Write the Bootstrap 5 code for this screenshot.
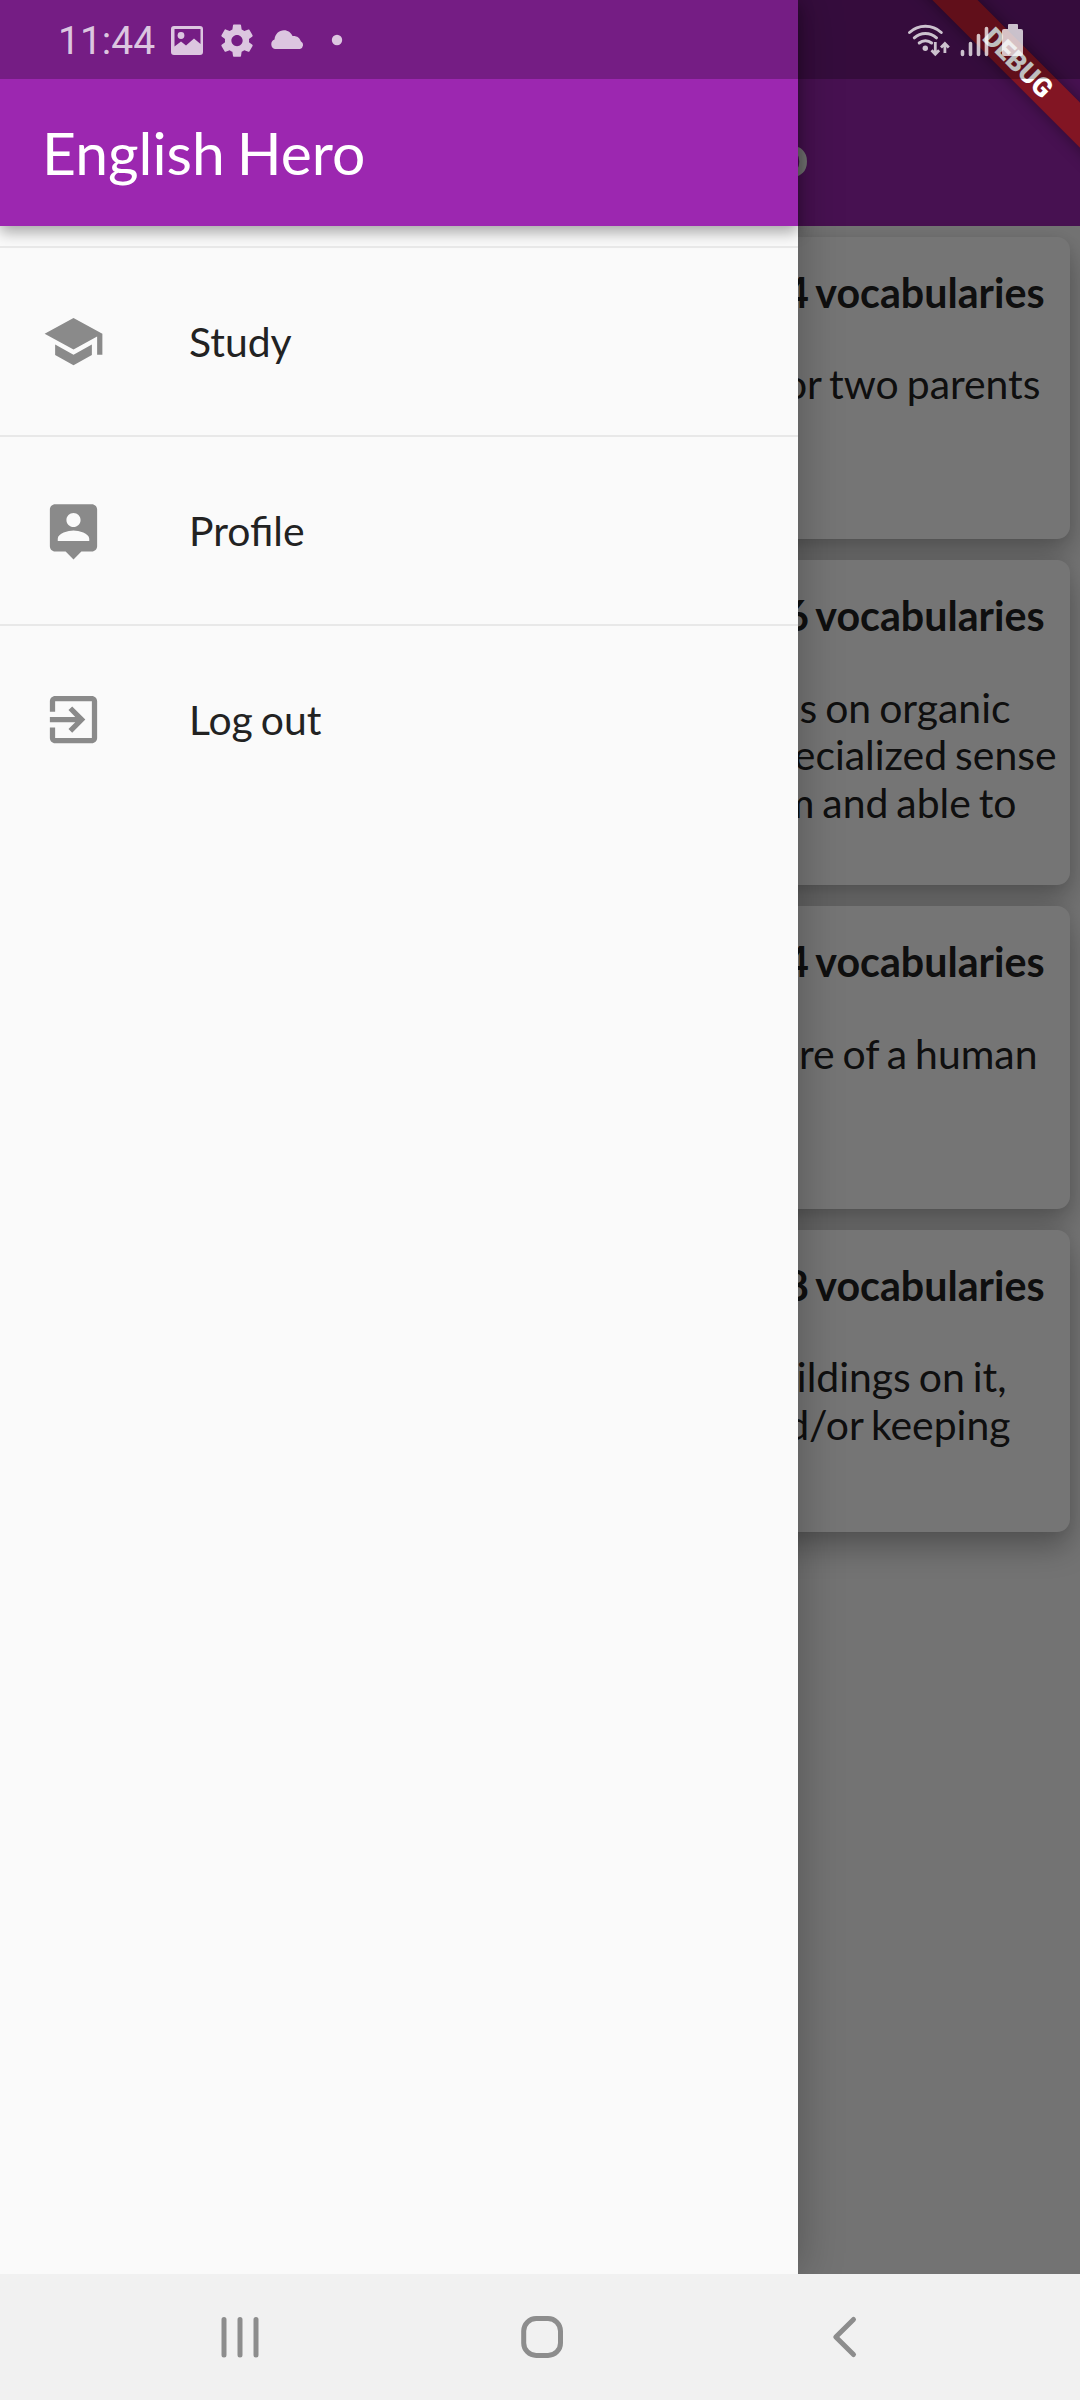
<!DOCTYPE html>
<html lang="en">
<head>
<meta charset="utf-8">
<meta name="viewport" content="width=device-width, initial-scale=1">
<title>English Hero</title>
<link href="https://cdn.jsdelivr.net/npm/bootstrap@5.3.0/dist/css/bootstrap.min.css" rel="stylesheet">
<style>
  body { font-family: Lato, "Liberation Sans", sans-serif; font-size: 40.900px; line-height: 47.5px; word-spacing: -2.5px; color: #222; }
  .screen { width: 1080px; height: 2400px; background: #fafafa; }
  .stage { height: 2274px; }
  .topbar { height: 226px; padding-top: 80px; background: #9c27b0; color: #fff; font-size: 58.8px; line-height: 146px; word-spacing: -3px; }
  .page-title { padding: 1px 271px 0 0; font-size: 60px; font-weight: 700; }
  .topic-list { padding: 10.5px; gap: 21px; }
  .topic { min-height: 302.5px; border: 0; border-radius: 13px; background: #fff; padding: 31px 0 0;
    box-shadow: 0 16px 30px rgba(0,0,0,.27), 0 2px 14px rgba(0,0,0,.07); }
  .topic.tall { min-height: 325.3px; }
  .topic h2 { font-size: 41.200px; line-height: 48px; font-weight: 700; margin: 0 25px 44.5px 0; }
  .topic p { margin: 0; white-space: nowrap; }
  .scrim { background: rgba(0,0,0,.54); }
  .drawer { width: 798px; background: #fafafa; box-shadow: 0 0 42px rgba(0,0,0,.28); }
  .drawer .topbar { padding-left: 42px; box-shadow: 0 6px 14px rgba(0,0,0,.34); }
  .drawer-menu { padding-top: 20px; }
  .drawer-menu .list-group-item { height: 189px; border: 0; border-top: 2px solid #e8e8e8; border-radius: 0; padding: 0 42px; gap: 84px; background: transparent; color: #222; }
  .drawer-menu svg { width: 63px; height: 63px; fill: #8a8a8a; }
  .banner-clip { width: 200px; height: 226px; }
  .debug-banner { width: 340px; height: 31.8px; left: -32.5px; top: 46.6px; transform: rotate(45deg); background: #821523;
    box-shadow: 0 0 16px rgba(0,0,0,.4); color: #fff; font: 900 26.8px/32px Roboto, sans-serif; }
  .statusbar { height: 79px; background: rgba(0,0,0,.25); color: rgba(255,255,255,.75); font: 400 39px/83px Roboto, sans-serif; }
  .statusbar svg { display: block; }
  .clock { width: 160px; padding-left: 58px; }
  .navbar-system { height: 126px; background: #f1f1f1; }
</style>
</head>
<body>
<div class="screen position-relative overflow-hidden">
  <main class="stage position-relative overflow-hidden">
    <header class="topbar text-end"><div class="page-title">o</div></header>
    <section class="topic-list d-flex flex-column">
      <article class="card topic text-end">
        <h2>4 vocabularies</h2>
        <p style="padding-right:29px">or two parents</p>
      </article>
      <article class="card topic tall text-end">
        <h2>6 vocabularies</h2>
        <p style="padding-right:59px">s on organic</p>
        <p style="padding-right:13px">ecialized sense</p>
        <p style="padding-right:53px">m and able to</p>
      </article>
      <article class="card topic text-end">
        <h2>4 vocabularies</h2>
        <p style="padding-right:32px">re of a human</p>
      </article>
      <article class="card topic text-end">
        <h2>8 vocabularies</h2>
        <p style="padding-right:63px">ildings on it,</p>
        <p style="padding-right:59px">d/or keeping</p>
      </article>
    </section>
    <div class="scrim position-absolute top-0 start-0 w-100 h-100"></div>
    <aside class="drawer position-absolute top-0 start-0 h-100">
      <header class="topbar">English Hero</header>
      <nav class="drawer-menu list-group">
        <a class="list-group-item d-flex align-items-center" href="#">
          <svg viewBox="0 0 24 24"><path d="M5 13.18v4L12 21l7-3.820v-4L12 17l-7-3.820zM12 3L1 9l11 6 9-4.910V17h2V9L12 3z"/></svg><span>Study</span></a>
        <a class="list-group-item d-flex align-items-center" href="#">
          <svg viewBox="0 0 24 24"><path d="M19 2H5c-1.110 0-2 .9-2 2v14c0 1.100.890 2 2 2h4l3 3 3-3h4c1.100 0 2-.9 2-2V4c0-1.100-.9-2-2-2zm-7 3.300c1.490 0 2.700 1.210 2.700 2.700s-1.210 2.700-2.700 2.700S9.300 9.490 9.300 8s1.210-2.700 2.700-2.700zM18 16H6v-.9c0-2 4-3.100 6-3.100s6 1.100 6 3.100v.9z"/></svg><span>Profile</span></a>
        <a class="list-group-item d-flex align-items-center" href="#">
          <svg viewBox="0 0 24 24"><path d="M10.090 15.590L11.500 17l5-5-5-5-1.410 1.410L12.670 11H3v2h9.670l-2.580 2.590zM19 3H5c-1.110 0-2 .9-2 2v4h2V5h14v14H5v-4H3v4c0 1.100.890 2 2 2h14c1.100 0 2-.9 2-2V5c0-1.100-.9-2-2-2z"/></svg><span>Log out</span></a>
      </nav>
    </aside>
    <div class="banner-clip position-absolute top-0 end-0 overflow-hidden">
      <div class="debug-banner position-absolute text-center">DEBUG</div>
    </div>
    <div class="statusbar position-absolute top-0 start-0 w-100 d-flex justify-content-between">
      <div class="d-flex">
        <span class="clock">11:44</span>
        <svg width="190" height="79" viewBox="160 0 190 79" fill="currentColor">
          <path fill-rule="evenodd" d="M174 26h26a3 3 0 0 1 3 3v23a3 3 0 0 1-3 3h-26a3 3 0 0 1-3-3V29a3 3 0 0 1 3-3zM174.500 29v17.500L181 41.500l5 4 8-7 6.500 5.500V29z"/>
          <circle cx="181" cy="35.500" r="3.400"/>
          <path transform="translate(217.700 21.300) scale(1.610)" d="M19.430 12.980c.04-.320.070-.640.070-.980s-.03-.660-.070-.980l2.110-1.650c.190-.150.240-.420.120-.640l-2-3.460c-.120-.220-.390-.3-.610-.220l-2.490 1c-.520-.4-1.080-.730-1.690-.980l-.380-2.650C14.460 2.180 14.250 2 14 2h-4c-.250 0-.460.180-.490.420l-.380 2.650c-.610.250-1.170.590-1.690.980l-2.490-1c-.230-.090-.490 0-.610.220l-2 3.460c-.130.220-.070.490.120.640l2.110 1.650c-.04.320-.070.650-.070.980s.03.660.070.980l-2.110 1.650c-.190.150-.240.420-.120.640l2 3.460c.120.220.390.3.610.220l2.490-1c.520.4 1.080.730 1.690.980l.380 2.650c.03.240.240.420.490.420h4c.250 0 .460-.180.490-.420l.380-2.650c.610-.250 1.170-.590 1.690-.980l2.490 1c.230.090.490 0 .610-.220l2-3.460c.120-.220.070-.490-.120-.640l-2.110-1.650zM12 15.500c-1.930 0-3.500-1.570-3.500-3.500s1.570-3.500 3.500-3.500 3.500 1.570 3.500 3.500-1.570 3.500-3.500 3.500z"/>
          <path d="M275 49a5 5 0 0 1-.500-9.500C275 34 279 30.200 284 30.200c4 0 7 2.300 8.500 5.800 4.500-.300 7.500 2 8.300 5.200A4.200 4.200 0 0 1 300 49z"/>
          <circle cx="337" cy="40" r="5.200"/>
        </svg>
      </div>
      <svg width="180" height="79" viewBox="900 0 180 79" fill="none" stroke="currentColor" stroke-width="3" stroke-linecap="round">
        <path d="M909.500 32.500a23.500 23.500 0 0 1 31.800 0M914.300 37.800a16.500 16.500 0 0 1 22.200 0M919.200 43a9.500 9.500 0 0 1 12.400 0"/>
        <circle cx="925.300" cy="48.300" r="2.700" fill="currentColor" stroke="none"/>
        <path stroke-width="2.800" stroke-linecap="butt" d="M935.300 42v12M931.500 50.200l3.800 4 3.800-4M944.900 53V43.500M941 47.500l3.900-4 3.900 4"/>
        <path stroke-width="3.600" d="M962.500 51.500v3M970.500 43.500v11M978.500 35.500v19M986.500 28.500v26"/>
        <path fill="currentColor" stroke="none" d="M1009 24h8a1 1 0 0 1 1 1v4h3a2 2 0 0 1 2 2v23a2 2 0 0 1-2 2h-17a2 2 0 0 1-2-2V31a2 2 0 0 1 2-2h4v-4a1 1 0 0 1 1-1z"/>
      </svg>
    </div>
  </main>
  <footer class="navbar-system">
    <svg class="d-block" width="1080" height="126" fill="none" stroke="#8d8d8d" stroke-width="5" stroke-linecap="round" stroke-linejoin="round">
      <path d="M224 45.500v35.500M240 45.500v35.500M256 45.500v35.500"/>
      <rect x="523.700" y="44.500" width="36.800" height="37" rx="12.500"/>
      <path d="M853.500 45.500L835.800 63l17.700 17.500"/>
    </svg>
  </footer>
</div>
<script src="https://cdn.jsdelivr.net/npm/bootstrap@5.3.0/dist/js/bootstrap.bundle.min.js"></script>
</body>
</html>
